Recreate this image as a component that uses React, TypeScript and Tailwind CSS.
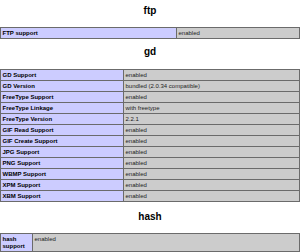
import React from 'react';

type Row = [string, string];

const sections: { name: string; col: number; rows: Row[]; head: string }[] = [
  { name: 'ftp', col: 176, head: 'mt-[5px] mb-[10px]', rows: [['FTP support', 'enabled']] },
  {
    name: 'gd',
    col: 123,
    head: 'mt-[7px] mb-[11px]',
    rows: [
      ['GD Support', 'enabled'],
      ['GD Version', 'bundled (2.0.34 compatible)'],
      ['FreeType Support', 'enabled'],
      ['FreeType Linkage', 'with freetype'],
      ['FreeType Version', '2.2.1'],
      ['GIF Read Support', 'enabled'],
      ['GIF Create Support', 'enabled'],
      ['JPG Support', 'enabled'],
      ['PNG Support', 'enabled'],
      ['WBMP Support', 'enabled'],
      ['XPM Support', 'enabled'],
      ['XBM Support', 'enabled'],
    ],
  },
  { name: 'hash', col: 32, head: 'mt-[9px] mb-[10px]', rows: [['hash support', 'enabled']] },
];

const InfoTable = ({ col, rows }: { col: number; rows: Row[] }) => (
  <table className="w-[300px] table-fixed border-collapse border border-[#6b6b6b]">
    <colgroup>
      <col style={{ width: col }} />
      <col />
    </colgroup>
    <tbody>
      {rows.map(([k, v]) => (
        <tr key={k}>
          <td className="border border-[#6b6b6b] bg-[#ccccff] px-[1.5px] py-[1.5px] align-top text-[6px] leading-[7px] font-bold text-black">
            {k}
          </td>
          <td className="border border-[#6b6b6b] bg-[#cccccc] px-[1.5px] py-[1.5px] align-top text-[6px] leading-[7px] text-[#222]">
            {v}
          </td>
        </tr>
      ))}
    </tbody>
  </table>
);

export default function App() {
  return (
    <div className="w-[300px] h-[252px] overflow-hidden bg-white font-['Liberation_Sans',Arial,sans-serif]">
      {sections.map((s) => (
        <div key={s.name}>
          <h2 className={`${s.head} text-center text-[10px] leading-[12px] font-bold text-black`}>{s.name}</h2>
          <InfoTable col={s.col} rows={s.rows} />
        </div>
      ))}
    </div>
  );
}
